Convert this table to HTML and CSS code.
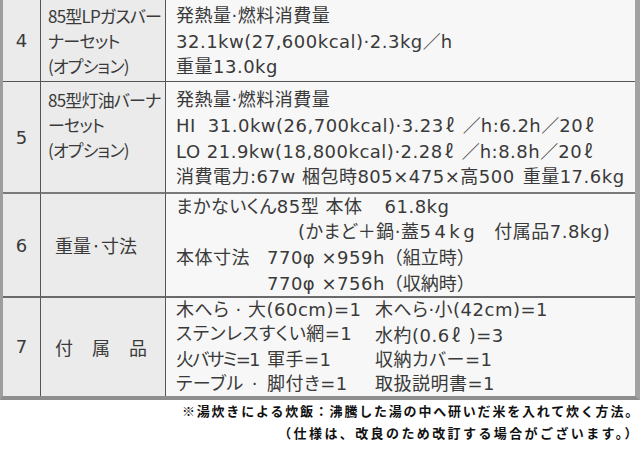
FILE: index.html
```html
<!DOCTYPE html>
<html lang="ja">
<head>
<meta charset="utf-8">
<title>仕様</title>
<link rel="stylesheet" href="styles.css">
</head>
<body>
<div class="spec">
  <div class="cell no r4">4</div>
  <div class="cell item r4">
    <div>85型LPガスバー</div>
    <div>ナーセット</div>
    <div>(オプション)</div>
  </div>
  <div class="cell detail r4">
    <div>発熱量·燃料消費量</div>
    <div>32.1kw(27,600kcal)·2.3kg<span class="fw">／</span>h</div>
    <div>重量13.0kg</div>
  </div>

  <div class="cell no r5">5</div>
  <div class="cell item r5">
    <div>85型灯油バーナ</div>
    <div>ーセット</div>
    <div>(オプション)</div>
  </div>
  <div class="cell detail r5">
    <div>発熱量·燃料消費量</div>
    <div>HI<span class="sp"></span>31.0kw(26,700kcal)·3.23<span class="ell">ℓ</span><span class="fw">／</span>h:6.2h<span class="fw">／</span>20<span class="ell">ℓ</span></div>
    <div>LO 21.9kw(18,800kcal)·2.28<span class="ell">ℓ</span><span class="fw">／</span>h:8.8h<span class="fw">／</span>20<span class="ell">ℓ</span></div>
    <div>消費電力:67w 梱包時805×475×高500<span class="sp-s"></span>重量17.6kg</div>
  </div>

  <div class="cell no r6">6</div>
  <div class="cell item center r6">重量·寸法</div>
  <div class="cell detail r6">
    <div>まかないくん85型 本体<span class="gap-a"></span>61.8kg</div>
    <div class="indent-a">(かまど＋鍋·蓋<span class="wide">54kg</span><span class="gap-b"></span>付属品7.8kg)</div>
    <div><span class="label">本体寸法</span>770φ ×959h<span class="fw">（組立時）</span></div>
    <div class="indent-b">770φ ×756h<span class="fw">（収納時）</span></div>
  </div>

  <div class="cell no r7">7</div>
  <div class="cell item center spaced r7">付属品</div>
  <div class="cell detail r7">
    <div class="acc">
      <div>木へら · 大(60cm)=1</div><div>木へら·小(42cm)=1</div>
      <div>ステンレスすくい網=1</div><div>水杓(0.6<span class="ell">ℓ</span>)=3</div>
      <div><span class="label-b tight">火バサミ=1</span>軍手=1</div><div>収納カバー=1</div>
      <div><span class="label-b">テーブル<span class="dot">·</span></span>脚付き=1</div><div>取扱説明書=1</div>
    </div>
  </div>
</div>
<div class="notes">
  <p>※湯炊きによる炊飯：沸騰した湯の中へ研いだ米を入れて炊く方法。</p>
  <p class="note-2">（仕様は、改良のため改訂する場合がございます。）</p>
</div>
</body>
</html>
```
FILE: styles.css
```css
html, body {
  margin: 0;
  padding: 0;
  background: #ffffff;
}
body {
  width: 640px;
  font-family: "DejaVu Sans", "Noto Sans CJK JP", sans-serif;
  color: #3a3a3a;
}
.spec {
  display: grid;
  grid-template-columns: 38px 125px 1fr;
  grid-template-rows: 82px 112px 104px 98px;
  border-left: 3px solid #9d9d9d;
  border-right: 5px solid #a2a2a2;
  border-bottom: 4px solid #8e8e8e;
}
.cell {
  box-sizing: border-box;
  font-size: 18px;
  line-height: 25px;
  font-feature-settings: "palt";
  white-space: nowrap;
}
.fw {
  font-family: "Noto Sans CJK JP", sans-serif;
  font-feature-settings: normal;
  letter-spacing: 0;
}
.ell {
  display: inline-block;
  width: 19px;
  padding-left: 2px;
  box-sizing: border-box;
  font-family: "Noto Sans CJK JP", sans-serif;
}
.sp { display: inline-block; width: 12px; }
.sp-s { display: inline-block; width: 8px; }
.no, .item {
  background: #ebebeb;
  border-right: 1px solid #555555;
}
.detail {
  background: #f7f7f7;
  padding-left: 10px;
  letter-spacing: 0.5px;
}
.no {
  display: flex;
  align-items: center;
  justify-content: center;
}
.item {
  padding-left: 7px;
  font-size: 17px;
  letter-spacing: -0.8px;
  font-family: "Noto Sans CJK JP", sans-serif;
}
.item.center {
  display: flex;
  align-items: center;
  padding-left: 14px;
  font-size: 18px;
  letter-spacing: 0;
}
.item.spaced {
  letter-spacing: 19px;
}
.r4 {
  border-bottom: 1px solid #555555;
  padding-top: 3px;
}
.no.r4 { padding-top: 0; }
.r5 {
  border-bottom: 2px solid #7a7a7a;
  padding-top: 5px;
}
.no.r5 { padding-top: 0; }
.r6 {
  border-bottom: 2px solid #6a6a6a;
}
.r7 {
  line-height: 24px;
}
.gap-a { display: inline-block; width: 22px; }
.gap-b { display: inline-block; width: 16px; }
.wide { letter-spacing: 3.5px; }
.indent-a { padding-left: 122px; }
.indent-b { padding-left: 91px; }
.label { display: inline-block; width: 91px; }
.label-b { display: inline-block; width: 91px; }
.tight { letter-spacing: -1.8px; }
.dot { margin-left: 8px; }
.acc {
  display: grid;
  grid-template-columns: 199px 1fr;
}
.notes {
  font-family: "Noto Sans CJK JP", sans-serif;
  font-weight: 700;
  font-size: 13px;
  line-height: 22px;
  letter-spacing: 1.8px;
  color: #111111;
  text-align: right;
}
.notes p {
  margin: 0;
}
.notes .note-2 {
  letter-spacing: 2.4px;
}
```
